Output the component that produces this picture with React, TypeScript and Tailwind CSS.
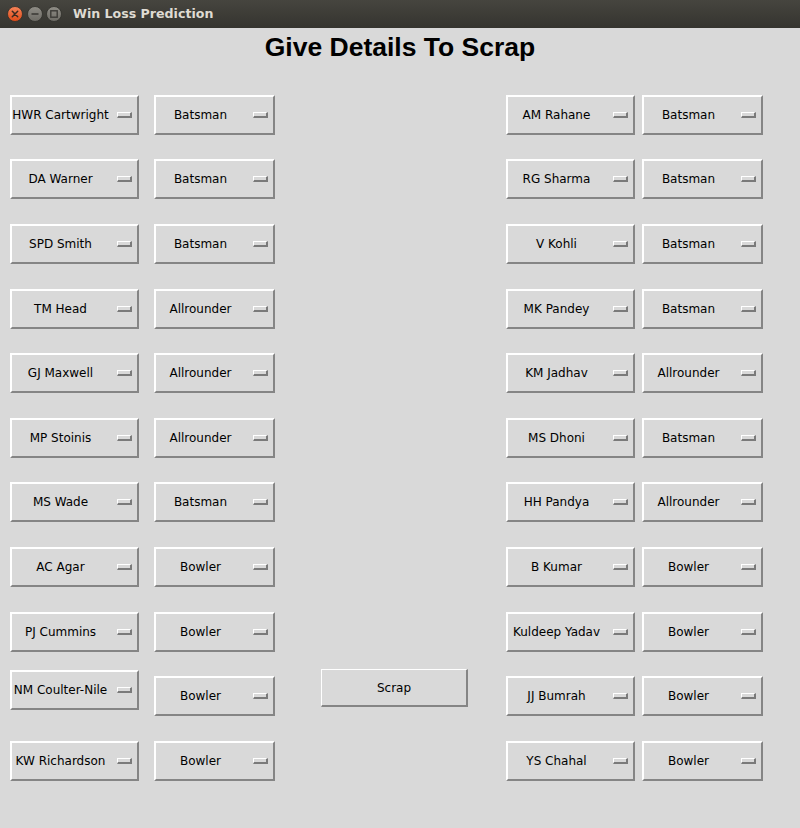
import React from "react";

type Player = { name: string; role: string };

const left: Player[] = [
  { name: "HWR Cartwright", role: "Batsman" },
  { name: "DA Warner", role: "Batsman" },
  { name: "SPD Smith", role: "Batsman" },
  { name: "TM Head", role: "Allrounder" },
  { name: "GJ Maxwell", role: "Allrounder" },
  { name: "MP Stoinis", role: "Allrounder" },
  { name: "MS Wade", role: "Batsman" },
  { name: "AC Agar", role: "Bowler" },
  { name: "PJ Cummins", role: "Bowler" },
  { name: "NM Coulter-Nile", role: "Bowler" },
  { name: "KW Richardson", role: "Bowler" },
];

const right: Player[] = [
  { name: "AM Rahane", role: "Batsman" },
  { name: "RG Sharma", role: "Batsman" },
  { name: "V Kohli", role: "Batsman" },
  { name: "MK Pandey", role: "Batsman" },
  { name: "KM Jadhav", role: "Allrounder" },
  { name: "MS Dhoni", role: "Batsman" },
  { name: "HH Pandya", role: "Allrounder" },
  { name: "B Kumar", role: "Bowler" },
  { name: "Kuldeep Yadav", role: "Bowler" },
  { name: "JJ Bumrah", role: "Bowler" },
  { name: "YS Chahal", role: "Bowler" },
];

// tk style option menu
const OptionMenu = ({ label, wide, shift }: { label: string; wide?: boolean; shift?: boolean }) => {
  return (
    <div
      className={`${wide ? "w-[129px]" : "w-[121px]"} ${shift ? "mt-[6px]" : ""} h-[40px] flex items-center bg-[#d9d9d9] border-t-2 border-l-2 border-t-white border-l-white border-b-2 border-r-2 border-b-[#858585] border-r-[#858585]`}
    >
      <span className="flex-1 text-center text-[12px] text-black whitespace-nowrap">{label}</span>
      <div
        className={`${wide ? "ml-[8px]" : "ml-[8px]"} mr-[5px] w-[15px] h-[6px] border-t border-l border-t-white border-l-white border-b-2 border-r-2 border-b-[#7a7a7a] border-r-[#7a7a7a]`}
      />
    </div>
  );
};

const TitleBar = () => (
  <div className="h-[28px] flex items-center bg-gradient-to-b from-[#46453f] to-[#35342f]">
    <svg width="64" height="28" viewBox="0 0 64 28" className="shrink-0">
      <defs>
        <linearGradient id="cl" x1="0" y1="0" x2="0" y2="1">
          <stop offset="0" stopColor="#f6845a" />
          <stop offset="1" stopColor="#df4a16" />
        </linearGradient>
        <linearGradient id="gr" x1="0" y1="0" x2="0" y2="1">
          <stop offset="0" stopColor="#8f8d86" />
          <stop offset="1" stopColor="#6c6a64" />
        </linearGradient>
      </defs>
      <circle cx="15" cy="14" r="7.5" fill="url(#cl)" stroke="#2f2e2a" strokeWidth="0.8" />
      <path d="M12.3 11.3 L17.7 16.7 M17.7 11.3 L12.3 16.7" stroke="#3a2a20" strokeWidth="1.5" strokeLinecap="round" />
      <circle cx="35" cy="14" r="7.5" fill="url(#gr)" stroke="#2f2e2a" strokeWidth="0.8" />
      <path d="M31.5 14 H38.5" stroke="#3c3b37" strokeWidth="1.6" />
      <circle cx="54" cy="14" r="7.5" fill="url(#gr)" stroke="#2f2e2a" strokeWidth="0.8" />
      <rect x="50.8" y="10.8" width="6.4" height="6.4" fill="none" stroke="#3c3b37" strokeWidth="1.4" />
    </svg>
    <span className="ml-[9px] text-[12.6px] font-bold text-[#dfdbd2] font-['DejaVu_Sans',sans-serif]">
      Win Loss Prediction
    </span>
  </div>
);

export default function App() {
  return (
    <div className="w-[800px] h-[828px] bg-[#d9d9d9] overflow-hidden font-['DejaVu_Sans',sans-serif]">
      <TitleBar />
      <h1 className="pt-[4px] text-center text-[26.5px] leading-[30px] font-bold text-black font-['Liberation_Sans',Arial,sans-serif]">
        Give Details To Scrap
      </h1>
      <div className="mt-[33px] pl-[10px] grid grid-cols-[144px_121px_231px_136px_121px] grid-rows-[64px_65px_65px_64px_65px_64px_65px_65px_58px_71px_40px] items-start">
        {left.map((p, i) => {
          const r = right[i];
          const row10 = i === 9;
          return (
            <React.Fragment key={p.name}>
              <OptionMenu label={p.name} wide />
              <OptionMenu label={p.role} shift={row10} />
              <div>
                {row10 && (
                  <button className="ml-[46px] mt-[-1px] w-[147px] h-[38px] bg-[#d9d9d9] text-[12px] text-black border-t border-l border-t-white border-l-white border-b-2 border-r-2 border-b-[#858585] border-r-[#858585]">
                    Scrap
                  </button>
                )}
              </div>
              <OptionMenu label={r.name} wide shift={row10} />
              <OptionMenu label={r.role} shift={row10} />
            </React.Fragment>
          );
        })}
      </div>
    </div>
  );
}
